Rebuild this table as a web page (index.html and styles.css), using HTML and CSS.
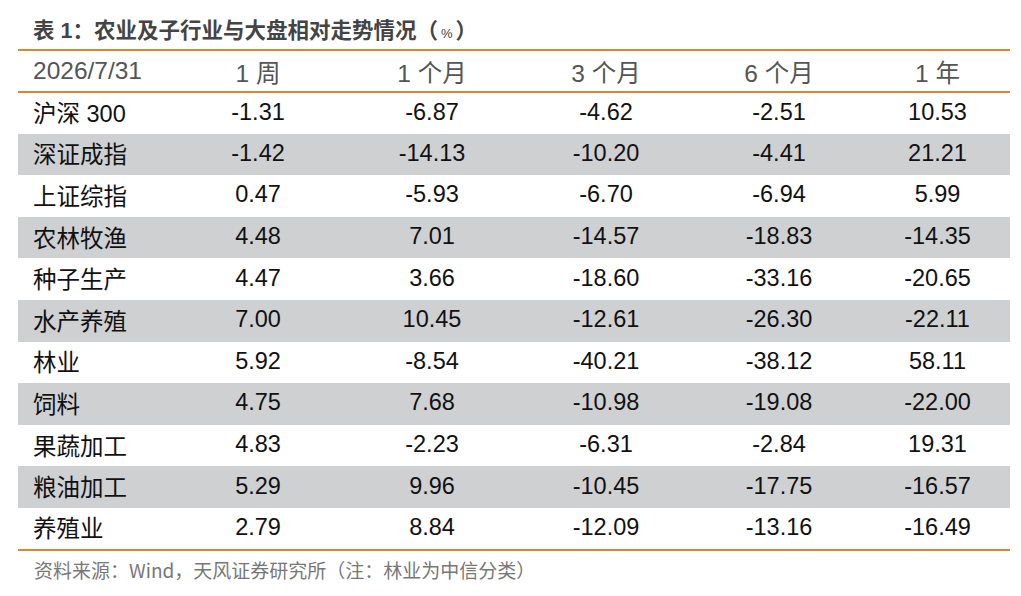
FILE: index.html
```html
<!DOCTYPE html>
<html lang="zh-CN">
<head>
<meta charset="utf-8">
<title>表 1：农业及子行业与大盘相对走势情况</title>
<link rel="stylesheet" href="styles.css">
</head>
<body>
<div class="page">
  <h1 class="title">表 1：农业及子行业与大盘相对走势情况（<span class="pct">%</span>）</h1>
  <table class="data">
    <colgroup>
      <col class="c1"><col class="c2"><col class="c3"><col class="c4"><col class="c5"><col class="c6">
    </colgroup>
    <thead>
      <tr><th>2026/7/31</th><th>1 周</th><th>1 个月</th><th>3 个月</th><th>6 个月</th><th>1 年</th></tr>
    </thead>
    <tbody>
      <tr><td>沪深 300</td><td>-1.31</td><td>-6.87</td><td>-4.62</td><td>-2.51</td><td>10.53</td></tr>
      <tr class="alt"><td>深证成指</td><td>-1.42</td><td>-14.13</td><td>-10.20</td><td>-4.41</td><td>21.21</td></tr>
      <tr><td>上证综指</td><td>0.47</td><td>-5.93</td><td>-6.70</td><td>-6.94</td><td>5.99</td></tr>
      <tr class="alt"><td>农林牧渔</td><td>4.48</td><td>7.01</td><td>-14.57</td><td>-18.83</td><td>-14.35</td></tr>
      <tr><td>种子生产</td><td>4.47</td><td>3.66</td><td>-18.60</td><td>-33.16</td><td>-20.65</td></tr>
      <tr class="alt"><td>水产养殖</td><td>7.00</td><td>10.45</td><td>-12.61</td><td>-26.30</td><td>-22.11</td></tr>
      <tr><td>林业</td><td>5.92</td><td>-8.54</td><td>-40.21</td><td>-38.12</td><td>58.11</td></tr>
      <tr class="alt"><td>饲料</td><td>4.75</td><td>7.68</td><td>-10.98</td><td>-19.08</td><td>-22.00</td></tr>
      <tr><td>果蔬加工</td><td>4.83</td><td>-2.23</td><td>-6.31</td><td>-2.84</td><td>19.31</td></tr>
      <tr class="alt"><td>粮油加工</td><td>5.29</td><td>9.96</td><td>-10.45</td><td>-17.75</td><td>-16.57</td></tr>
      <tr><td>养殖业</td><td>2.79</td><td>8.84</td><td>-12.09</td><td>-13.16</td><td>-16.49</td></tr>
    </tbody>
  </table>
  <p class="source">资料来源：Wind，天风证券研究所（注：林业为中信分类）</p>
</div>
</body>
</html>
```

FILE: styles.css
```css
html, body {
  margin: 0;
  padding: 0;
  background: #ffffff;
}

body {
  font-family: "Liberation Sans", Arial, "Noto Sans CJK SC", sans-serif;
}

.page {
  width: 992px;
  padding: 0 11px 0 18px;
}

.title {
  margin: 0;
  height: 49px;
  box-sizing: border-box;
  padding: 20px 0 0 15px;
  font-size: 21.5px;
  line-height: 22px;
  font-weight: bold;
  color: #444444;
  white-space: nowrap;
}

.title .pct {
  font-size: 13px;
  font-weight: normal;
  padding: 0 3px;
}

.data {
  width: 992px;
  border-collapse: collapse;
  table-layout: fixed;
  border-top: 2px solid #d58a2f;
  border-bottom: 2px solid #d58a2f;
}

.c1 { width: 153px; }
.c2 { width: 174px; }
.c3 { width: 174px; }
.c4 { width: 174px; }
.c5 { width: 172px; }
.c6 { width: 145px; }

.data th {
  height: 40px;
  padding: 0;
  font-size: 24.5px;
  font-weight: normal;
  color: #555555;
  text-align: center;
  border-bottom: 2px solid #d58a2f;
  white-space: nowrap;
}

.data td {
  height: 41.6px;
  padding: 0 0 2px 0;
  box-sizing: border-box;
  font-size: 23.5px;
  color: #111111;
  text-align: center;
  white-space: nowrap;
}

.data th:first-child,
.data td:first-child {
  text-align: left;
  padding-left: 15px;
}

.data tr.alt td {
  background: #cfd0d2;
}

.source {
  margin: 0;
  padding: 8px 0 0 16px;
  font-family: "Noto Sans CJK SC", "Liberation Sans", sans-serif;
  font-size: 19px;
  line-height: 22px;
  color: #777777;
  white-space: nowrap;
}
```
